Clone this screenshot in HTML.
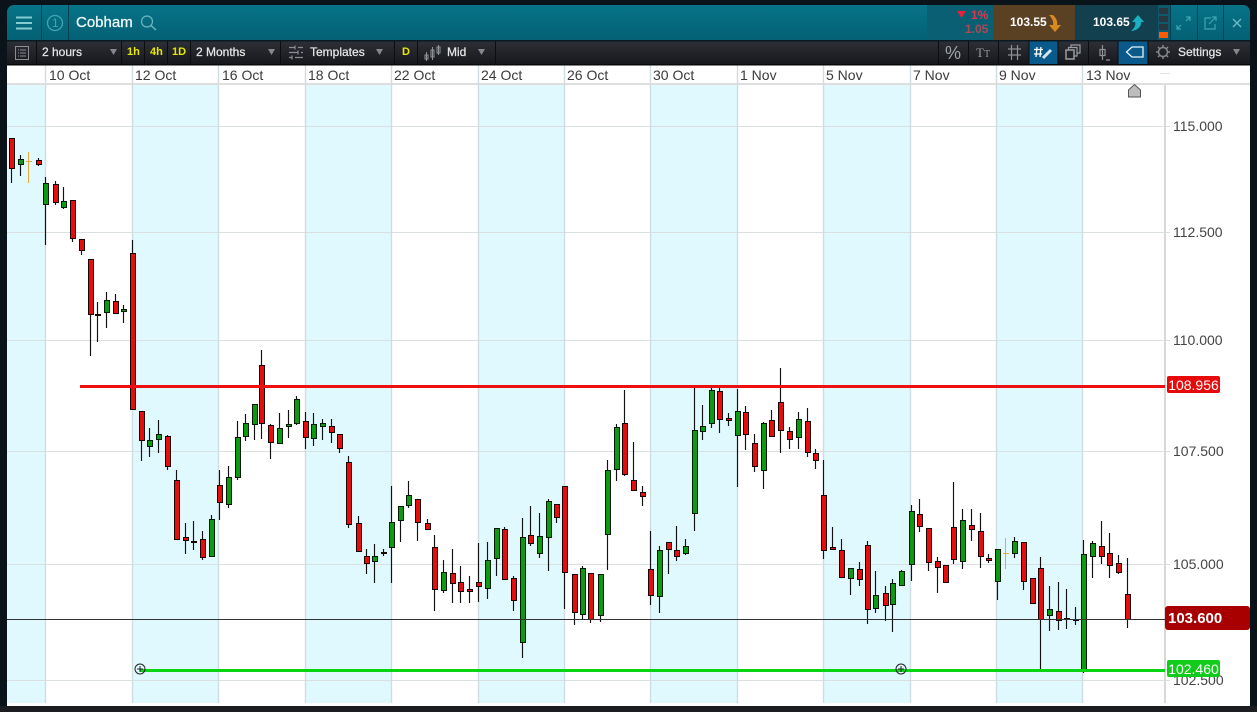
<!DOCTYPE html>
<html><head><meta charset="utf-8"><title>Cobham</title>
<style>
html,body{margin:0;padding:0;width:1257px;height:712px;overflow:hidden;background:#0b131a;font-family:"Liberation Sans",Arial,sans-serif}
div,span{position:absolute;white-space:nowrap}
.b{background:#2a2d33}
.tb{color:#e6e6e6;font-size:12px;line-height:16px;top:44px;-webkit-text-stroke:.25px #e6e6e6}
.y{color:#e8e800;font-size:11px;font-weight:bold;line-height:16px;top:44px}
.d{font-size:14px;line-height:18px;top:66px;color:#3a3a3a}
.a{font-size:14px;line-height:16px;left:1173px;color:#444}
.l{color:#fff;text-align:center;border-radius:2px}
</style></head><body>
<div style="left:7px;top:5px;width:1243px;height:36px;border-radius:7px 7px 0 0;background:linear-gradient(#077488,#045f74)"></div>
<div style="left:927px;top:5px;width:66px;height:35px;background:#0a5f73"></div>
<div style="left:993px;top:5px;width:82px;height:35px;background:#5b4123"></div>
<div style="left:1075px;top:5px;width:83px;height:35px;background:#12404f"></div>
<div style="left:1158px;top:5px;width:12px;height:35px;background:#0d5a6c"></div>
<div style="left:7px;top:41px;width:1243px;height:24px;background:linear-gradient(#2d3037,#16171b)"></div>
<div style="left:1029px;top:41px;width:29px;height:24px;background:#095a8a"></div>
<div style="left:1118px;top:41px;width:30px;height:24px;background:#095a8a"></div>
<div style="left:7px;top:65px;width:1243px;height:641px;background:#fff"></div>
<div style="left:0;top:706px;width:1257px;height:6px;background:#1b1d20"></div>

<svg width="1257" height="712" style="position:absolute;left:0;top:0">
<!-- bands -->
<g fill="#e0f9ff">
<rect x="7" y="85" width="38" height="618"/><rect x="132" y="85" width="86" height="618"/><rect x="305" y="85" width="86" height="618"/><rect x="478" y="85" width="86" height="618"/><rect x="651" y="85" width="86" height="618"/><rect x="824" y="85" width="86" height="618"/><rect x="997" y="85" width="85" height="618"/>
</g>
<rect x="7" y="83" width="1243" height="2" fill="#dedede"/>
<!-- horizontal grid -->
<path d="M7 126.500H1170M7 232.500H1170M7 340.500H1170M7 451.500H1170M7 564.500H1170M7 680.500H1170" stroke="#dadfe1" stroke-width="1"/>
<!-- vertical grid -->
<path d="M45.500 65V703M132.500 65V703M218.500 65V703M305.500 65V703M391.500 65V703M478.500 65V703M564.500 65V703M650.500 65V703M737.500 65V703M823.500 65V703M910.500 65V703M996.500 65V703M1082.500 65V703" stroke="#cfdde1" stroke-width="1.400"/>
<path d="M1165 85V703" stroke="#d8d8d8" stroke-width="2"/>
<path d="M1160 73.500H1170" stroke="#e4e4e4"/>
<!-- wicks -->
<path fill="none" stroke="#111" stroke-width="1.150" d="M11.5 138V183M20.5 155V176M38.5 158V166M45.5 177V245M55.5 181V205M63.5 187V209M72.5 200V242M81.5 239V255M90.5 259V356M97.5 302V342M106.5 292V328M115.5 294V314M123.5 305V323M132.5 240V410M141.5 411V461M149.5 428V457M158.5 420V453M167.5 435V470M176.5 470V540M185.5 523V554M193.5 521V550M202.5 531V560M211.5 515V557M219.5 470V520M228.5 466V508M237.5 421V480M245.5 414V441M254.5 404V440M261.5 350V439M270.5 424V459M279.5 413V444M288.5 410V438M296.5 396V425M305.5 412V449M313.5 413V446M322.5 419V440M331.5 419V443M339.5 434V453M348.5 456V528M358.5 516V552M366.5 549V574M374.5 544V583M383.5 549V556M391.5 486V583M400.5 506V542M408.5 481V508M417.5 499V541M427.5 519V530M434.5 535V611M443.5 560V593M452.5 549V603M460.5 566V603M469.5 576V603M478.5 543V602M487.5 542V599M496.5 528V576M504.5 527V580M513.5 576V611M522.5 518V658M530.5 506V546M539.5 513V558M548.5 499V571M556.5 504V523M564.5 486V609M574.5 574V625M582.5 566V619M590.5 573V623M600.5 574V622M607.5 460V570M616.5 424V481M624.5 390V476M633.5 442V490M642.5 486V506M650.5 531V605M659.5 546V613M668.5 542V574M676.5 526V561M685.5 539V555M694.5 386V531M702.5 405V440M711.5 388V428M719.5 388V433M728.5 413V426M737.5 389V487M745.5 406V450M754.5 434V472M763.5 422V489M771.5 410V436M780.5 368V453M789.5 427V449M798.5 412V449M807.5 408V457M815.5 449V469M823.5 460V559M832.5 527V550M841.5 539V577M850.5 568V595M859.5 562V586M867.5 541V624M875.5 571V613M885.5 586V621M892.5 579V632M901.5 570V585M911.5 505V581M919.5 499V532M928.5 528V571M937.5 557V593M945.5 565V583M953.5 482V564M962.5 509V569M971.5 509V541M980.5 513V568M988.5 554V563M997.5 549V600M1014.5 537V558M1023.5 542V590M1032.5 578V604M1040.5 557V669M1049.5 586V631M1058.5 582V630M1066.5 589V629M1075.5 607V625M1083.5 540V673M1092.5 541V578M1101.5 521V564M1109.5 533V578M1118.5 555V574M1127.5 558V628"/>
<path fill="none" stroke="#e8a83c" stroke-width="1" d="M28.5 152V183M26 161.5H32M1005.5 538V569M1003 553.5H1009"/>
<!-- red bodies -->
<path fill="#e60d0d" stroke="#1a0505" stroke-width="1" d="M9.5 138.5h5v30h-5zM36.5 160.5h5v4h-5zM53.5 184.5h5v18h-5zM70.5 200.5h5v38h-5zM79.5 239.5h5v11h-5zM88.5 259.5h5v55h-5zM95.5 314.5h5v1h-5zM113.5 301.5h5v12h-5zM130.5 253.5h5v156h-5zM139.5 411.5h5v29h-5zM165.5 436.5h5v30h-5zM174.5 480.5h5v59h-5zM183.5 537.5h5v3h-5zM191.5 541.5h5v1h-5zM200.5 539.5h5v18h-5zM217.5 485.5h5v17h-5zM259.5 365.5h5v58h-5zM268.5 425.5h5v17h-5zM303.5 421.5h5v16h-5zM329.5 426.5h5v6h-5zM337.5 434.5h5v14h-5zM346.5 462.5h5v62h-5zM356.5 523.5h5v28h-5zM364.5 556.5h5v7h-5zM381.5 552.5h5v1h-5zM415.5 499.5h5v23h-5zM425.5 523.5h5v6h-5zM432.5 547.5h5v42h-5zM450.5 573.5h5v10h-5zM458.5 582.5h5v9h-5zM467.5 589.5h5v2h-5zM476.5 582.5h5v4h-5zM502.5 529.5h5v50h-5zM511.5 578.5h5v22h-5zM528.5 535.5h5v8h-5zM554.5 504.5h5v13h-5zM562.5 486.5h5v86h-5zM572.5 574.5h5v38h-5zM588.5 573.5h5v46h-5zM622.5 423.5h5v51h-5zM631.5 480.5h5v10h-5zM640.5 492.5h5v4h-5zM648.5 569.5h5v26h-5zM666.5 542.5h5v7h-5zM674.5 550.5h5v6h-5zM717.5 391.5h5v28h-5zM726.5 418.5h5v2h-5zM743.5 412.5h5v22h-5zM752.5 443.5h5v23h-5zM769.5 420.5h5v16h-5zM778.5 402.5h5v28h-5zM787.5 431.5h5v8h-5zM805.5 421.5h5v31h-5zM813.5 453.5h5v7h-5zM821.5 495.5h5v55h-5zM830.5 547.5h5v2h-5zM839.5 550.5h5v27h-5zM857.5 569.5h5v10h-5zM865.5 545.5h5v64h-5zM883.5 593.5h5v12h-5zM917.5 514.5h5v12h-5zM926.5 528.5h5v34h-5zM935.5 561.5h5v6h-5zM943.5 565.5h5v17h-5zM951.5 527.5h5v32h-5zM969.5 525.5h5v4h-5zM978.5 531.5h5v25h-5zM986.5 558.5h5v2h-5zM1021.5 542.5h5v39h-5zM1030.5 578.5h5v25h-5zM1038.5 568.5h5v51h-5zM1056.5 611.5h5v9h-5zM1064.5 618.5h5v1h-5zM1073.5 619.5h5v1h-5zM1099.5 546.5h5v10h-5zM1107.5 553.5h5v12h-5zM1116.5 563.5h5v9h-5zM1125.5 594.5h5v25h-5z"/>
<!-- green bodies -->
<path fill="#0c9a10" stroke="#051a05" stroke-width="1" d="M18.5 159.5h5v5h-5zM43.5 183.5h5v21h-5zM61.5 201.5h5v6h-5zM104.5 300.5h5v12h-5zM121.5 309.5h5v2h-5zM147.5 440.5h5v6h-5zM156.5 434.5h5v5h-5zM209.5 519.5h5v37h-5zM226.5 477.5h5v27h-5zM235.5 437.5h5v40h-5zM243.5 423.5h5v13h-5zM252.5 404.5h5v20h-5zM277.5 428.5h5v15h-5zM286.5 424.5h5v2h-5zM294.5 399.5h5v24h-5zM311.5 424.5h5v14h-5zM320.5 423.5h5v3h-5zM372.5 556.5h5v5h-5zM389.5 522.5h5v25h-5zM398.5 506.5h5v14h-5zM406.5 495.5h5v10h-5zM441.5 572.5h5v18h-5zM485.5 560.5h5v28h-5zM494.5 528.5h5v30h-5zM520.5 537.5h5v105h-5zM537.5 536.5h5v17h-5zM546.5 501.5h5v36h-5zM580.5 568.5h5v46h-5zM598.5 574.5h5v41h-5zM605.5 470.5h5v64h-5zM614.5 427.5h5v42h-5zM657.5 550.5h5v46h-5zM683.5 546.5h5v7h-5zM692.5 430.5h5v83h-5zM700.5 426.5h5v5h-5zM709.5 390.5h5v33h-5zM735.5 411.5h5v24h-5zM761.5 423.5h5v47h-5zM796.5 419.5h5v18h-5zM848.5 568.5h5v10h-5zM873.5 595.5h5v13h-5zM890.5 583.5h5v21h-5zM899.5 571.5h5v14h-5zM909.5 511.5h5v53h-5zM960.5 520.5h5v41h-5zM995.5 549.5h5v32h-5zM1012.5 541.5h5v12h-5zM1047.5 609.5h5v6h-5zM1081.5 554.5h5v115h-5zM1090.5 543.5h5v13h-5z"/>
<!-- overlay lines -->
<rect x="7" y="619" width="1158" height="1" fill="#333"/>
<rect x="80" y="385" width="1085" height="3" fill="#ee1010"/>
<rect x="140" y="669" width="1025" height="3" fill="#08d414"/>
<g fill="none" stroke="#222" stroke-width="1"><circle cx="140" cy="669" r="5"/><circle cx="901" cy="669" r="5"/><path d="M137 669h6M140 666v6M898 669h6M901 666v6"/></g>
<path d="M1128.500 97V90L1134.500 84.500L1140.500 90V97Z" fill="#bdbdbd" stroke="#555"/>

<!-- header dividers -->
<path d="M41.500 5V40M68.500 5V40" stroke="#04404f"/>
<rect x="7" y="40" width="1243" height="1.500" fill="#0a1a20"/>
<!-- hamburger -->
<path d="M16 17.500H32M16 23H32M16 28.500H32" stroke="#86cbd2" stroke-width="2"/>
<circle cx="55" cy="23" r="7.500" fill="none" stroke="#3fa6b2" stroke-width="1.300"/>
<circle cx="147" cy="21.500" r="5.500" fill="none" stroke="#6db6c0" stroke-width="1.200"/>
<path d="M151 25.500L156 30" stroke="#6db6c0" stroke-width="1.500"/>
<!-- right icons -->
<path d="M957 11H966L961.500 18Z" fill="#e8203a"/>
<path d="M1049 15L1053 15C1056 18 1058 21 1057 25L1061 25L1055 32L1049 25L1053 25C1054 22 1052 18 1049 15Z" fill="#d88a20"/>
<path d="M1131 31C1135 28 1136 24 1135 22L1132 22L1138 15L1144 22L1141 22C1142 26 1137 31 1131 31Z" fill="#1ab0c4"/>
<g fill="#2a3642"><rect x="1159" y="8" width="9" height="6"/><rect x="1159" y="16" width="9" height="6"/><rect x="1159" y="24" width="9" height="6"/></g>
<rect x="1159" y="32" width="9" height="6" fill="#ff5a00"/>
<path d="M1170.500 5V40M1197.500 5V40M1223.500 5V40" stroke="#04404f"/>
<g fill="none" stroke="#3ea5b3" stroke-width="1.200">
<path d="M1177 29L1181 25M1177 25V29H1181M1190 17L1186 21M1186 17H1190V21"/>
<path d="M1211 18H1205V29H1215V24M1209 24L1216 17M1212 17H1216V21"/>
<path d="M1233 19L1241 27M1241 19L1233 27" stroke="#6cbcc6" stroke-width="1.400"/>
</g>
<!-- toolbar dividers -->
<path d="M36.500 41V65M121.500 41V65M144.500 41V65M167.500 41V65M190.500 41V65M280.500 41V65M394.500 41V65M417.500 41V65M495.500 41V65M938.500 41V65M968.500 41V65M998.500 41V65M1029 41V65M1058 41V65M1088.500 41V65M1118 41V65M1148 41V65" stroke="#0c0d10"/>
<rect x="7" y="64" width="1243" height="1.500" fill="#08090b"/>
<!-- list icon -->
<g fill="none" stroke="#8a8d93">
<rect x="15.500" y="46.500" width="13" height="13"/>
<path d="M18 50h1M20 50h6M18 53h1M20 53h6M18 56h1M20 56h6"/>
</g>
<!-- triangles -->
<g fill="#85888c"><path d="M110 49H117L113.500 55ZM268 49H275L271.500 55ZM376 49H383L379.500 55ZM478 49H485L481.500 55ZM1233 49H1240L1236.500 55Z"/></g>
<!-- sliders -->
<g stroke="#8a8d92" stroke-width="1.200" fill="none"><path d="M289 47.500H295M298 47.500H303M289 52.500H298M301 52.500H303M289 57.500H292M295 57.500H303M295 45.500V49.500M298 50.500V54.500M292 55.500V59.500"/></g>
<!-- mini candles -->
<g stroke="#8f9297" fill="none"><path d="M426.500 52v9M432.500 47v13M438.500 45v10"/><rect x="425" y="55" width="3" height="4"/><rect x="431" y="50" width="3" height="7"/><rect x="437" y="47" width="3" height="6"/></g>
<!-- right toolbar icons -->
<g fill="none" stroke="#9a9da2" stroke-width="1.200">
<path d="M1008 49H1021M1008 55H1021M1011.500 45V60M1017.500 45V60" stroke="#8d9095"/>
<path d="M1037 47L1036 57M1041 47L1040 57M1034 49.500H1043M1034 54H1042" stroke="#fff" stroke-width="1.300"/>
<path d="M1043 58L1051 50" stroke="#cfe7f2" stroke-width="3"/>
<rect x="1066" y="50" width="8" height="9" stroke-width="1.500"/>
<path d="M1068.500 50V47.500H1077V56H1074M1071 47.500V45H1080V53H1077"/>
<path d="M1102.500 45V60M1100 49.500H1105V55.500H1100ZM1106 60H1110" stroke="#8d9095"/>
<path d="M1132 47H1143V57H1132L1126.500 52Z" stroke="#e8f2f6" stroke-width="1.300"/>
<circle cx="1163" cy="52" r="4.500" stroke="#85888c" stroke-width="1.500"/>
<path d="M1163 45V47M1163 57V59M1156 52H1158M1168 52H1170M1158 47L1160 49M1166 55L1168 57M1168 47L1166 49M1160 55L1158 57" stroke="#85888c" stroke-width="1.500"/>
</g>
</svg>

<!-- header text -->
<span style="left:52px;top:15px;font-size:12px;line-height:16px;color:#3fa6b2">1</span>
<span style="left:76px;top:14px;font-size:15px;line-height:18px;color:#eef7f8;-webkit-text-stroke:.3px #eef7f8">Cobham</span>
<span style="left:971px;top:8px;font-size:12px;line-height:14px;font-weight:bold;color:#d83a50">1%</span>
<span style="left:965px;top:22px;font-size:12px;line-height:14px;font-weight:bold;color:#a84a52">1.05</span>
<span style="left:1010px;top:15px;font-size:12px;line-height:15px;font-weight:bold;color:#fff">103.55</span>
<span style="left:1093px;top:15px;font-size:12px;line-height:15px;font-weight:bold;color:#fff">103.65</span>

<!-- toolbar text -->
<span class="tb" style="left:42px">2 hours</span>
<span class="y" style="left:127px">1h</span>
<span class="y" style="left:150px">4h</span>
<span class="y" style="left:172px">1D</span>
<span class="tb" style="left:196px">2 Months</span>
<span class="tb" style="left:310px">Templates</span>
<span class="y" style="left:402px">D</span>
<span class="tb" style="left:447px">Mid</span>
<span class="tb" style="left:1178px">Settings</span>
<span style="left:945px;top:43px;font-size:18px;line-height:20px;color:#a0a3a8">%</span>
<span style="left:976px;top:45px;font-size:13px;line-height:16px;color:#95989c;font-family:'Liberation Serif',serif">T<span style="position:static;font-size:10px">T</span></span>

<!-- dates -->
<span class="d" style="left:49px">10 Oct</span>
<span class="d" style="left:135px">12 Oct</span>
<span class="d" style="left:222px">16 Oct</span>
<span class="d" style="left:308px">18 Oct</span>
<span class="d" style="left:394px">22 Oct</span>
<span class="d" style="left:481px">24 Oct</span>
<span class="d" style="left:567px">26 Oct</span>
<span class="d" style="left:653px">30 Oct</span>
<span class="d" style="left:740px">1 Nov</span>
<span class="d" style="left:826px">5 Nov</span>
<span class="d" style="left:913px">7 Nov</span>
<span class="d" style="left:999px">9 Nov</span>
<span class="d" style="left:1086px">13 Nov</span>

<!-- axis -->
<span class="a" style="top:118px">115.000</span>
<span class="a" style="top:224px">112.500</span>
<span class="a" style="top:332px">110.000</span>
<span class="a" style="top:443px">107.500</span>
<span class="a" style="top:556px">105.000</span>
<span class="a" style="top:672px">102.500</span>
<div class="l" style="left:1167px;top:376px;width:53px;height:17px;line-height:18px;font-size:14px;background:#e60a0a">108.956</div>
<div class="l" style="left:1165px;top:606px;width:85px;height:24px;background:#a80000;border-radius:3px"></div>
<span style="left:1168px;top:610px;font-size:15px;line-height:18px;font-weight:bold;color:#fff">103.600</span>
<div class="l" style="left:1167px;top:660px;width:53px;height:17px;line-height:19px;font-size:14px;background:#12cc1c">102.460</div>
</body></html>
